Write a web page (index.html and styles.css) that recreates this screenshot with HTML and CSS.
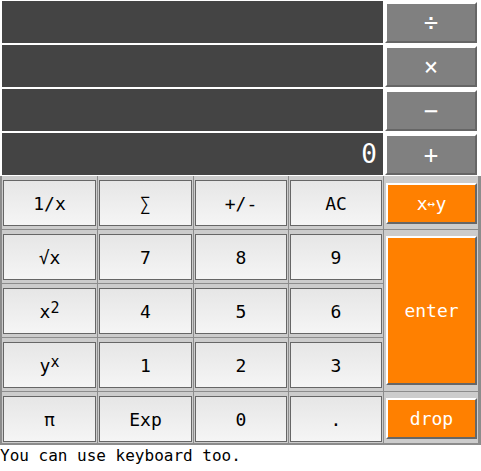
FILE: index.html
```html
<!DOCTYPE html>
<html>
<head>
<meta charset="utf-8">
<link rel="stylesheet" href="styles.css">
</head>
<body>
<div class="calc">
  <div class="top">
    <div class="display"></div><div class="op">÷</div>
    <div class="display"></div><div class="op">×</div>
    <div class="display"></div><div class="op">−</div>
    <div class="display">0</div><div class="op">+</div>
  </div>
  <div class="keypad">
    <div class="cell"><div class="key">1/x</div></div>
    <div class="cell"><div class="key">∑</div></div>
    <div class="cell"><div class="key">+/-</div></div>
    <div class="cell"><div class="key">AC</div></div>
    <div class="cell swap"><div class="okey">x<span class="arrow">↔</span>y</div></div>

    <div class="cell"><div class="key">√x</div></div>
    <div class="cell"><div class="key">7</div></div>
    <div class="cell"><div class="key">8</div></div>
    <div class="cell"><div class="key">9</div></div>
    <div class="cell enter"><div class="okey">enter</div></div>

    <div class="cell"><div class="key">x<sup>2</sup></div></div>
    <div class="cell"><div class="key">4</div></div>
    <div class="cell"><div class="key">5</div></div>
    <div class="cell"><div class="key">6</div></div>

    <div class="cell"><div class="key">y<sup>x</sup></div></div>
    <div class="cell"><div class="key">1</div></div>
    <div class="cell"><div class="key">2</div></div>
    <div class="cell"><div class="key">3</div></div>

    <div class="cell"><div class="key">π</div></div>
    <div class="cell"><div class="key">Exp</div></div>
    <div class="cell"><div class="key">0</div></div>
    <div class="cell"><div class="key">.</div></div>
    <div class="cell drop"><div class="okey">drop</div></div>
  </div>
</div>
<p class="hint">You can use keyboard too.</p>
</body>
</html>
```
FILE: styles.css
```css
* { box-sizing: border-box; }
body {
  margin: 0;
  background: #fff;
  font-family: "DejaVu Sans Mono", "Liberation Mono", monospace;
}
.calc { width: 481px; }
.top {
  display: grid;
  grid-template-columns: 381px 92px;
  grid-auto-rows: 42px;
  column-gap: 2px;
  row-gap: 2px;
  padding: 1px 4px 1px 2px;
}
.display {
  background: #444444;
  color: #fff;
  font-size: 26px;
  display: flex;
  align-items: center;
  justify-content: flex-end;
  padding-right: 6px;
}
.op {
  margin-top: 1px;
  height: 41px;
  border: 2px solid;
  border-color: #fff #666 #666 #fff;
  background: #808080;
  color: #fff;
  font-size: 24px;
  display: flex;
  align-items: center;
  justify-content: center;
}
.keypad {
  display: grid;
  grid-template-columns: 95px 95px 94px 94px 94px;
  grid-template-rows: 53px 53px 53px 53px 51px;
  gap: 1px;
  background: #8c8c8c;
  border-left: 2px solid #8c8c8c;
  border-right: 3px solid #8c8c8c;
  border-bottom: 2px solid #8c8c8c;
}
.cell {
  background: #cccccc;
  padding: 4px 1px 3px 1px;
}
.cell:nth-last-child(-n+5) { padding-bottom: 1px; }
.key {
  height: 100%;
  border: 1px solid #666;
  background: linear-gradient(#e6e6e6, #f5f5f5);
  color: #000;
  font-size: 18px;
  display: flex;
  align-items: center;
  justify-content: center;
}
.key sup {
  font-size: 15px;
  line-height: 0;
  position: relative;
  top: -3px;
}
.cell.swap { padding: 7px 1px 5px 2px; }
.cell.enter { grid-column: 5; grid-row: 2 / 5; padding: 6px 1px 6px 2px; }
.cell.drop { grid-column: 5; grid-row: 5; padding: 6px 1px 4px 2px; }
.okey {
  height: 100%;
  border: 2px solid;
  border-color: #fff #666 #666 #fff;
  background: #ff8000;
  color: #fff;
  font-size: 18px;
  display: flex;
  align-items: center;
  justify-content: center;
}
.arrow { font-size: 13px; }
.hint {
  margin: 0;
  font-size: 16px;
  line-height: 19px;
  padding-top: 1px;
  color: #000;
}
```
